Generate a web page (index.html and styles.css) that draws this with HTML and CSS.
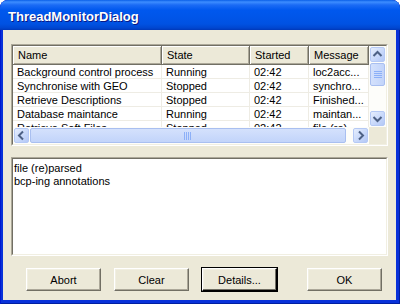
FILE: index.html
```html
<!DOCTYPE html>
<html>
<head>
<meta charset="utf-8">
<link rel="stylesheet" href="styles.css">
</head>
<body>
<div class="window">
  <div class="titlebar"><span class="title">ThreadMonitorDialog</span></div>
  <div class="client">
    <div class="listview">
      <div class="lv-inner">
        <div class="lv-main">
          <div class="lv-view">
            <div class="lv-row lv-header">
              <div class="cell c1">Name</div>
              <div class="cell c2">State</div>
              <div class="cell c3">Started</div>
              <div class="cell c4">Message</div>
            </div>
            <div class="lv-row">
              <div class="cell c1">Background control process</div>
              <div class="cell c2">Running</div>
              <div class="cell c3">02:42</div>
              <div class="cell c4">loc2acc...</div>
            </div>
            <div class="lv-row">
              <div class="cell c1">Synchronise with GEO</div>
              <div class="cell c2">Stopped</div>
              <div class="cell c3">02:42</div>
              <div class="cell c4">synchro...</div>
            </div>
            <div class="lv-row">
              <div class="cell c1">Retrieve Descriptions</div>
              <div class="cell c2">Stopped</div>
              <div class="cell c3">02:42</div>
              <div class="cell c4">Finished...</div>
            </div>
            <div class="lv-row">
              <div class="cell c1">Database maintance</div>
              <div class="cell c2">Running</div>
              <div class="cell c3">02:42</div>
              <div class="cell c4">maintan...</div>
            </div>
            <div class="lv-row">
              <div class="cell c1">Retrieve Soft Files</div>
              <div class="cell c2">Stopped</div>
              <div class="cell c3">02:42</div>
              <div class="cell c4">file (re)...</div>
            </div>
          </div>
          <div class="hscroll">
            <div class="sbtn"><svg width="15" height="15" viewBox="0 0 15 15"><path d="M9 3.5 L5 7.5 L9 11.5" fill="none" stroke="#4D6185" stroke-width="2"/></svg></div>
            <div class="hthumb"><svg width="8" height="8" viewBox="0 0 8 8"><path d="M0.5 0V8M2.5 0V8M4.5 0V8M6.5 0V8" stroke="#8CB0F8" stroke-width="1"/></svg></div>
            <div class="htrack"></div>
            <div class="sbtn"><svg width="15" height="15" viewBox="0 0 15 15"><path d="M6 3.5 L10 7.5 L6 11.5" fill="none" stroke="#4D6185" stroke-width="2"/></svg></div>
          </div>
        </div>
        <div class="vscroll">
          <div class="sbtn"><svg width="15" height="15" viewBox="0 0 15 15"><path d="M3.5 9 L7.5 5 L11.5 9" fill="none" stroke="#4D6185" stroke-width="2"/></svg></div>
          <div class="vthumb"><svg width="8" height="8" viewBox="0 0 8 8"><path d="M0 0.5H8M0 2.5H8M0 4.5H8M0 6.5H8" stroke="#8CB0F8" stroke-width="1"/></svg></div>
          <div class="vtrack"></div>
          <div class="sbtn"><svg width="15" height="15" viewBox="0 0 15 15"><path d="M3.5 6 L7.5 10 L11.5 6" fill="none" stroke="#4D6185" stroke-width="2"/></svg></div>
          <div class="corner"></div>
        </div>
      </div>
    </div>
    <div class="log">
      <div class="log-inner">file (re)parsed<br>bcp-ing annotations</div>
    </div>
    <div class="buttons">
      <button class="btn">Abort</button>
      <button class="btn">Clear</button>
      <button class="btn default">Details...</button>
      <button class="btn ok">OK</button>
    </div>
  </div>
</div>
</body>
</html>
```

FILE: styles.css
```css
html, body {
  margin: 0;
  padding: 0;
  background: #ffffff;
}
body {
  font-family: "Liberation Sans", Arial, sans-serif;
  font-size: 11px;
  color: #000;
}
.window {
  width: 400px;
  height: 304px;
  box-sizing: border-box;
  background: #0831D9;
  border-radius: 8px 8px 0 0;
  display: flex;
  flex-direction: column;
  overflow: hidden;
  box-shadow: inset 1px 0 0 #0019CF, inset -1px 0 0 #001EA0, inset 0 -1px 0 #001EA0;
}
.titlebar {
  height: 30px;
  flex: none;
  background: linear-gradient(to bottom, #0A5FE8 0px, #3D8DFF 2px, #1B6BF5 5px, #0058EE 10px, #0055E8 18px, #0052E2 24px, #0046D0 28px, #0038B8 30px);
  display: flex;
  align-items: flex-start;
  padding: 9px 0 0 8px;
  box-sizing: border-box;
}
.title {
  color: #fff;
  font-weight: bold;
  font-size: 13px;
  line-height: 16px;
  text-shadow: 1px 1px 0 #0A1883;
}
.client {
  flex: 1;
  margin: 0 4px 4px 3px;
  background: #ECE9D8;
  display: flex;
  flex-direction: column;
  padding: 14px 8px 9px 8px;
}
.listview {
  height: 102px;
  box-sizing: border-box;
  border: 1px solid;
  border-color: #ACA899 #FFFFFF #FFFFFF #ACA899;
  flex: none;
}
.lv-inner {
  height: 100%;
  box-sizing: border-box;
  border: 1px solid;
  border-color: #716F64 #F1EFE2 #F1EFE2 #716F64;
  display: flex;
  background: #fff;
}
.lv-main {
  width: 356px;
  display: flex;
  flex-direction: column;
}
.lv-view {
  height: 81px;
  overflow: hidden;
}
.lv-row {
  display: flex;
  height: 14px;
}
.lv-row .cell {
  box-sizing: border-box;
  border-right: 1px solid #EEECE4;
  border-bottom: 1px solid #EEECE4;
  padding-left: 4px;
  padding-top: 1px;
  line-height: 13px;
  white-space: nowrap;
  overflow: hidden;
}
.lv-header {
  height: 19px;
}
.lv-header .cell {
  background: #ECE9D8;
  border-right: 1px solid #716F64;
  border-bottom: 1px solid #716F64;
  box-shadow: inset 1px 1px 0 #fff, inset -1px -1px 0 #ACA899;
  line-height: 18px;
  padding-top: 0;
  padding-left: 5px;
}
.c1 { width: 149px; }
.c2 { width: 88px; }
.c3 { width: 59px; }
.c4 { width: 60px; }
.hscroll {
  height: 17px;
  display: flex;
  background: #FDFDFA;
}
.vscroll {
  width: 17px;
  display: flex;
  flex-direction: column;
  background: #FDFDFA;
}
.sbtn {
  width: 15px;
  height: 15px;
  margin: 1px;
  flex: none;
  box-sizing: border-box;
  border-radius: 2px;
  border: 1px solid #B5C9F5;
  background: linear-gradient(135deg, #E6EEFD 0%, #C6D7FA 60%, #B4C8F6 100%);
  display: flex;
  align-items: center;
  justify-content: center;
}
.sbtn svg { flex: none; margin: -1px; }
.hthumb {
  width: 316px;
  margin: 1px 0;
  box-sizing: border-box;
  border: 1px solid #A9BFF0;
  border-radius: 2px;
  background: linear-gradient(to bottom, #D4E1FC, #C2D4FA);
  display: flex;
  align-items: center;
  justify-content: center;
  flex: none;
}
.htrack { flex: 1; }
.vthumb {
  height: 23px;
  margin: 0 1px;
  box-sizing: border-box;
  border: 1px solid #A9BFF0;
  border-radius: 2px;
  background: linear-gradient(to right, #D4E1FC, #C2D4FA);
  display: flex;
  align-items: center;
  justify-content: center;
  flex: none;
}
.vtrack { flex: 1; }
.corner {
  height: 17px;
  flex: none;
  background: #ECE9D8;
}
.log {
  margin-top: 11px;
  height: 99px;
  box-sizing: border-box;
  border: 1px solid;
  border-color: #ACA899 #FFFFFF #FFFFFF #ACA899;
  flex: none;
}
.log-inner {
  height: 100%;
  box-sizing: border-box;
  border: 1px solid;
  border-color: #716F64 #F1EFE2 #F1EFE2 #716F64;
  background: #fff;
  padding: 3px 1px;
  line-height: 13px;
}
.buttons {
  margin-top: 12px;
  display: flex;
  gap: 13px;
  padding-left: 15px;
  padding-right: 6px;
}
.btn {
  width: 75px;
  height: 23px;
  box-sizing: border-box;
  font-family: "Liberation Sans", Arial, sans-serif;
  font-size: 11px;
  color: #000;
  background: #ECE9D8;
  border: 1px solid;
  border-color: #FFFFFF #716F64 #716F64 #FFFFFF;
  box-shadow: inset -1px -1px 0 #ACA899, inset 1px 1px 0 #F1EFE2;
  padding: 0;
  margin: 0;
}
.btn.default {
  outline: 1px solid #000;
  outline-offset: 0;
  border-color: #FFFFFF #000 #000 #FFFFFF;
  box-shadow: inset -1px -1px 0 #716F64, inset 1px 1px 0 #F1EFE2;
}
.btn.ok {
  margin-left: auto;
}
```
